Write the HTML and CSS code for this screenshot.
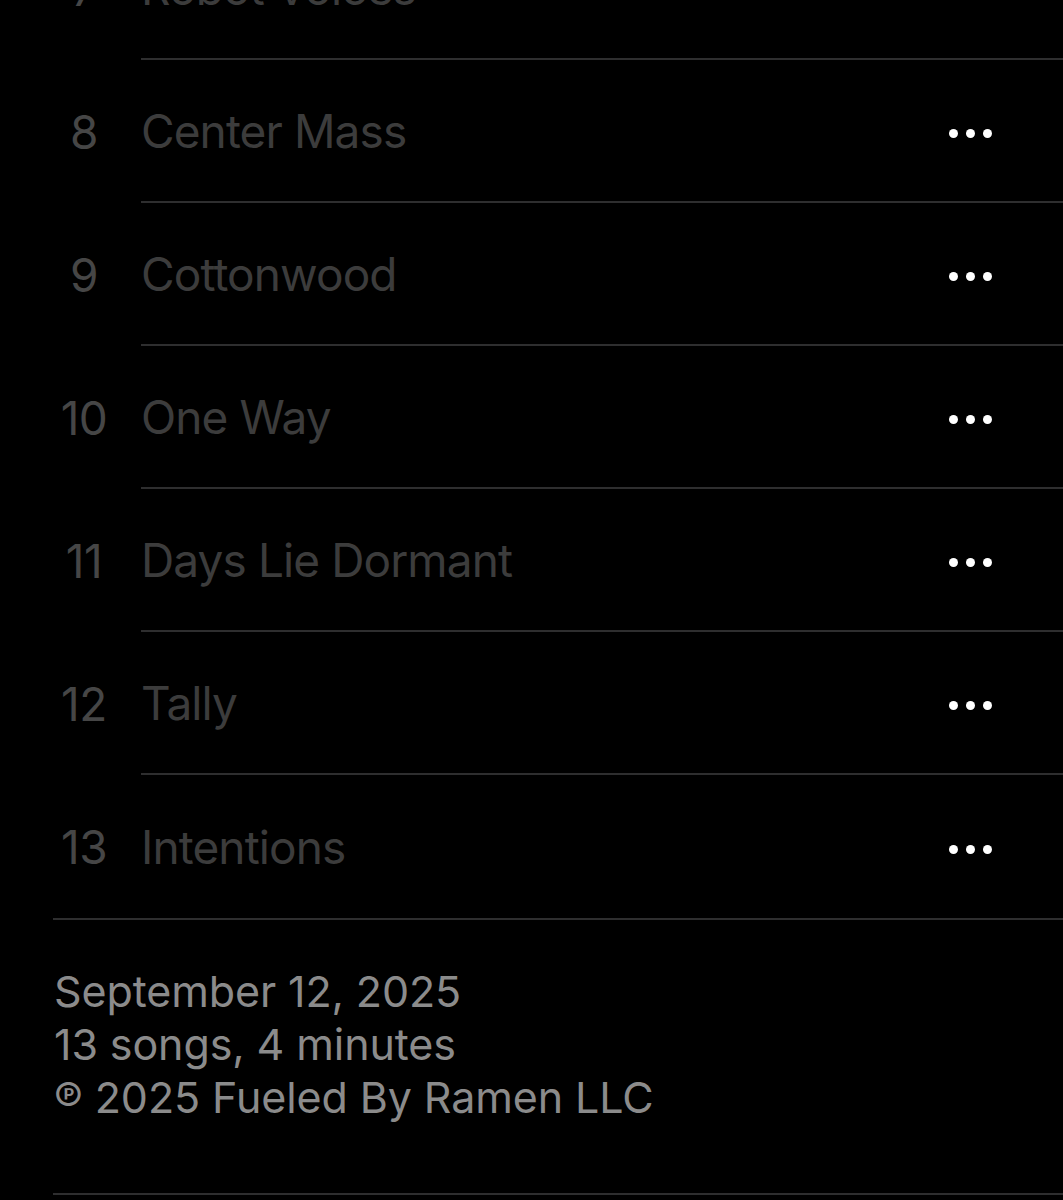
FILE: index.html
```html
<!DOCTYPE html>
<html lang="en">
<head>
    <meta charset="UTF-8">
    <meta name="viewport" content="width=device-width, initial-scale=1.0">
    <title>Album tracks</title>
    <link rel="stylesheet" href="styles.css">
</head>
<body>
    <ul class="track-list">
        <li class="track">
            <span class="track-num">7</span>
            <div class="track-body">
                <span class="track-title">Robot Voices</span>
                <span class="track-more"><i></i><i></i><i></i></span>
            </div>
        </li>
        <li class="track">
            <span class="track-num">8</span>
            <div class="track-body">
                <span class="track-title">Center Mass</span>
                <span class="track-more"><i></i><i></i><i></i></span>
            </div>
        </li>
        <li class="track">
            <span class="track-num">9</span>
            <div class="track-body">
                <span class="track-title">Cottonwood</span>
                <span class="track-more"><i></i><i></i><i></i></span>
            </div>
        </li>
        <li class="track">
            <span class="track-num">10</span>
            <div class="track-body">
                <span class="track-title">One Way</span>
                <span class="track-more"><i></i><i></i><i></i></span>
            </div>
        </li>
        <li class="track">
            <span class="track-num">11</span>
            <div class="track-body">
                <span class="track-title">Days Lie Dormant</span>
                <span class="track-more"><i></i><i></i><i></i></span>
            </div>
        </li>
        <li class="track">
            <span class="track-num">12</span>
            <div class="track-body">
                <span class="track-title">Tally</span>
                <span class="track-more"><i></i><i></i><i></i></span>
            </div>
        </li>
        <li class="track">
            <span class="track-num">13</span>
            <div class="track-body">
                <span class="track-title">Intentions</span>
                <span class="track-more"><i></i><i></i><i></i></span>
            </div>
        </li>
    </ul>

    <div class="album-info">
        <p>September 12, 2025</p>
        <p>13 songs, 4 minutes</p>
        <p>℗ 2025 Fueled By Ramen LLC</p>
    </div>
</body>
</html>
```

FILE: styles.css
```css
* {
    margin: 0;
    padding: 0;
    box-sizing: border-box;
    font-family: Inter, 'Noto Sans', sans-serif;
}

body {
    background: #000;
    color: #fff;
    overflow: hidden;
    height: 100vh;
}

.track-list {
    list-style: none;
    margin: -83px 0 0 53px;
    border-bottom: 2px solid #2e2e2f;
}

.track {
    display: flex;
    height: 143px;
}

.track-num {
    width: 62px;
    display: flex;
    align-items: center;
    justify-content: center;
    font-size: 46px;
    color: #464646;
    letter-spacing: -0.5px;
}

.track-body {
    flex: 1;
    display: flex;
    align-items: center;
    justify-content: space-between;
    margin-left: 26px;
    padding-right: 71px;
    border-bottom: 2px solid #2e2e2f;
}

.track:last-child .track-body {
    border-bottom: none;
}

.track-title {
    font-size: 46px;
    color: #3c3c3c;
    letter-spacing: -0.9px;
}

.track-more {
    display: flex;
    gap: 8px;
    margin-top: 5px;
}

.track-more i {
    width: 9px;
    height: 9px;
    border-radius: 50%;
    background: #fff;
}

.album-info {
    margin-left: 53px;
    padding: 45px 0 69px 1px;
    border-bottom: 2px solid #2e2e2f;
    color: #8b8b8b;
    font-size: 43px;
    line-height: 53px;
    letter-spacing: -0.1px;
}
```
